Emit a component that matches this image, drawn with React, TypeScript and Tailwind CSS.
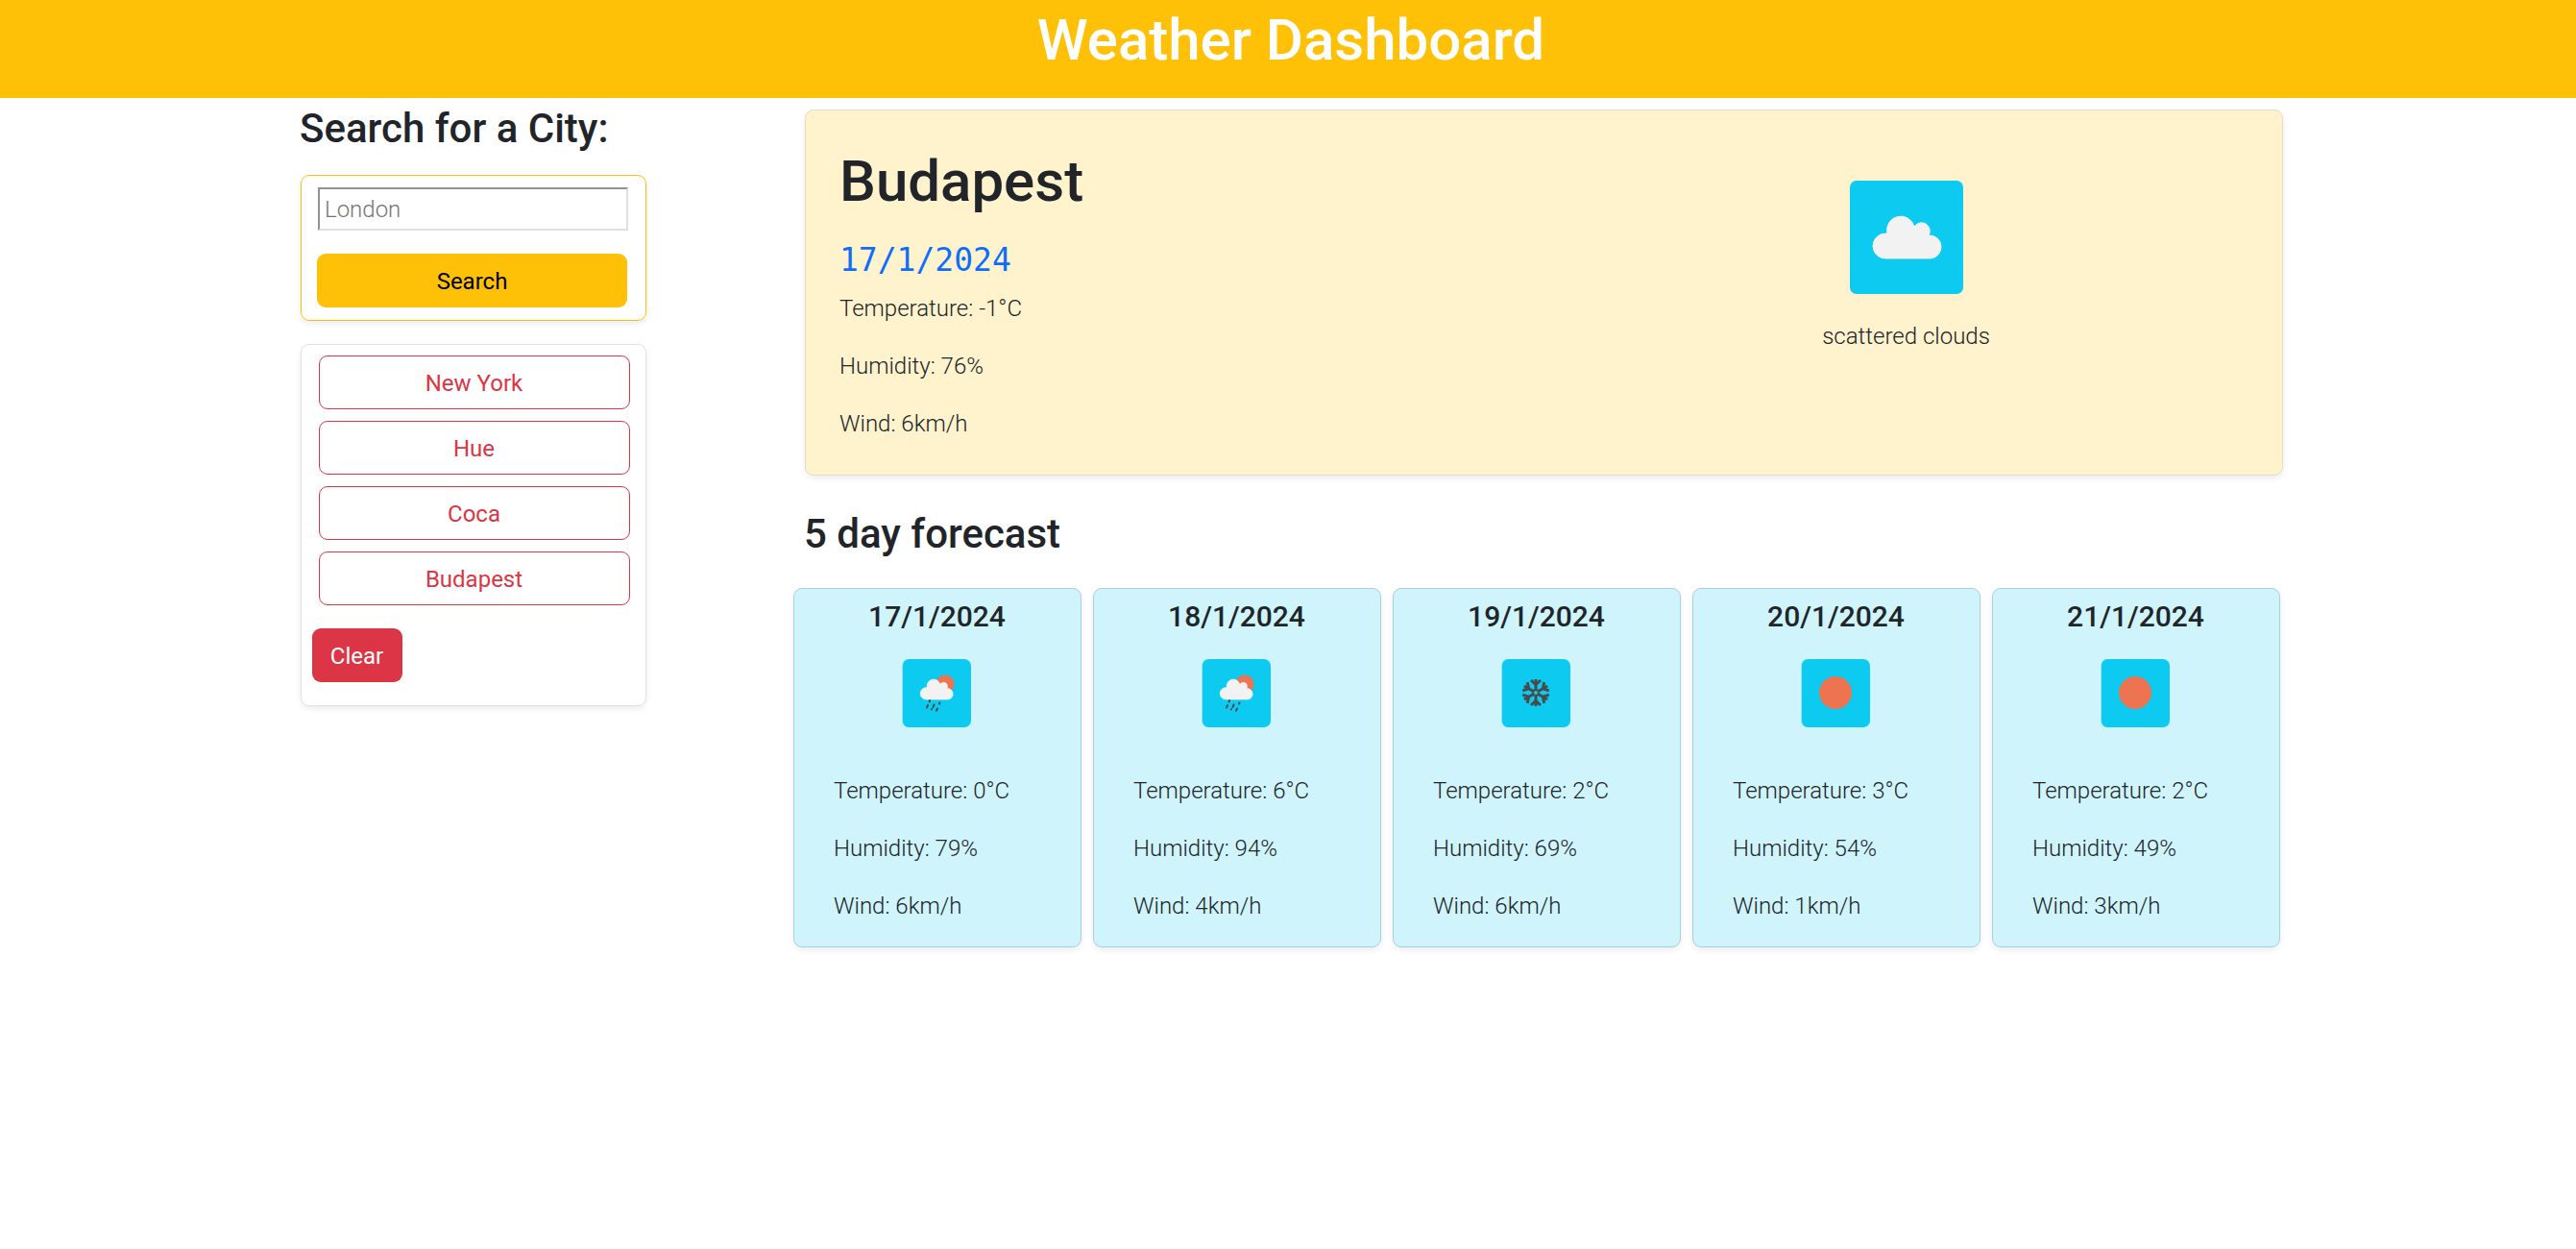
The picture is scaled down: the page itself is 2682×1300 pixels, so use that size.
const cities = ['New York', 'Hue', 'Coca', 'Budapest'];

const forecast = [
  { date: '17/1/2024', icon: 'rain', temp: '0°C', humidity: '79%', wind: '6km/h' },
  { date: '18/1/2024', icon: 'rain', temp: '6°C', humidity: '94%', wind: '4km/h' },
  { date: '19/1/2024', icon: 'snow', temp: '2°C', humidity: '69%', wind: '6km/h' },
  { date: '20/1/2024', icon: 'sun', temp: '3°C', humidity: '54%', wind: '1km/h' },
  { date: '21/1/2024', icon: 'sun', temp: '2°C', humidity: '49%', wind: '3km/h' },
];

const CLOUD =
  'M37 81A13 13 0 0 1 37 55H39A14 14 0 0 1 67 48A7.5 7.5 0 0 1 82 57A12 12 0 0 1 84 81Z';

function BigCloud() {
  return (
    <div className="h-[118px] w-[118px] overflow-hidden rounded-[7px] bg-[#0dcaf0]">
      <svg viewBox="0 0 118 118" className="block h-full w-full">
        <path d={CLOUD} fill="#f2f2f2" stroke="#fff" strokeWidth="0.8" />
      </svg>
    </div>
  );
}

function SmallIcon({ type }: { type: string }) {
  return (
    <div className="h-[71px] w-[72px] overflow-hidden rounded-[7px] border-l border-l-[#8fe4f6] bg-[#0dcaf0]">
      <svg viewBox="0 0 71 71" className="block h-full w-full">
        {type === 'sun' && <circle cx="35" cy="35" r="17" fill="#ee7350" />}
        {type === 'rain' && (
          <g>
            <circle cx="44" cy="26" r="9.5" fill="#ee7350" />
            <g transform="translate(6.6 3.2) scale(0.48)">
              <path d={CLOUD} fill="#f2f2f2" stroke="#fff" strokeWidth="1" />
            </g>
            <g stroke="#4a4a4a" strokeWidth="2" strokeLinecap="round">
              <path d="M28 43L27.6 44.5" />
              <path d="M26 48L25 50.5" />
              <path d="M32.5 47.5L31.5 50" />
              <path d="M38.5 45.5L38 46.5" />
              <path d="M30 52L29.8 52.5" />
              <path d="M36 51.5L35 53.5" />
            </g>
          </g>
        )}
        {type === 'snow' && (
          <g stroke="#4a4a4a" strokeWidth="3" fill="none" transform="translate(35 35)">
            {[0, 60, 120, 180, 240, 300].map((a) => (
              <g key={a} transform={`rotate(${a})`}>
                <path d="M0 -3.5V-14" />
                <path d="M-5 -13L0 -8.5L5 -13" />
              </g>
            ))}
            <circle r="3" strokeWidth="2" />
          </g>
        )}
      </svg>
    </div>
  );
}

function Stat({ children }: { children: React.ReactNode }) {
  return <p className="mb-6 text-2xl leading-9 font-light">{children}</p>;
}

export default function App() {
  return (
    <div className="min-h-[1300px] bg-white font-['Roboto',sans-serif] text-[#212529]">
      <header className="flex h-[102px] justify-center bg-[#ffc107] pt-[6px] pl-[6px]">
        <h1 className="text-[60px] leading-[72px] font-medium text-white">Weather Dashboard</h1>
      </header>

      <div className="flex pl-[312px]">
        <aside className="w-[526px] pt-[7px]">
          <h2 className="text-[42px] leading-[50px] font-medium">Search for a City:</h2>
          <div className="mt-[23px] ml-px h-[152px] w-[360px] rounded-[9px] border border-[#ffc107] pt-3 pl-[16px] shadow-[0_3px_6px_rgba(0,0,0,0.075)]">
            <input
              placeholder="London"
              className="ml-px block h-[45px] w-[323px] border-2 border-t-[#929292] border-r-[#e0e0e0] border-b-[#e0e0e0] border-l-[#929292] px-[5px] text-2xl font-light outline-none placeholder:text-[#757575]"
            />
            <button className="mt-6 block h-14 w-[323px] rounded-[9px] bg-[#ffc107] pt-px text-2xl text-black">
              Search
            </button>
          </div>
          <div className="mt-6 ml-px h-[377px] w-[360px] rounded-[9px] border border-[#dee2e6] pt-[11px] pl-[11px] shadow-[0_3px_6px_rgba(0,0,0,0.075)]">
            <div className="ml-[7px] flex w-[324px] flex-col gap-3">
              {cities.map((city) => (
                <button
                  key={city}
                  className="h-14 rounded-[9px] border border-[#dc3545] pt-px pr-px text-2xl text-[#dc3545]"
                >
                  {city}
                </button>
              ))}
            </div>
            <button className="mt-6 h-14 w-[94px] rounded-[9px] bg-[#dc3545] pt-px pr-px text-2xl text-white">
              Clear
            </button>
          </div>
        </aside>

        <main className="w-[1539px] pt-3">
          <section className="flex h-[381px] rounded-[9px] border border-[#e6dcc0] bg-[#fff3cd] shadow-[0_3px_6px_rgba(0,0,0,0.075)]">
            <div className="w-[762px] pt-[38px] pl-[35px]">
              <h2 className="text-[60px] leading-[72px] font-medium">Budapest</h2>
              <code className="mt-[26px] block font-['DejaVu_Sans_Mono',monospace] text-[33px] leading-[39px] text-[#0d6efd]">
                17/1/2024
              </code>
              <div className="mt-[13px]">
                <Stat>Temperature: -1°C</Stat>
                <Stat>Humidity: 76%</Stat>
                <Stat>Wind: 6km/h</Stat>
              </div>
            </div>
            <div className="flex w-[767px] flex-col items-center pt-[73px]">
              <BigCloud />
              <p className="mt-[26px] text-2xl leading-9 font-light">scattered clouds</p>
            </div>
          </section>

          <h2 className="mt-[36px] -ml-px text-[42px] leading-[50px] font-medium">5 day forecast</h2>

          <div className="mt-[31px] -ml-3 flex gap-3">
            {forecast.map((day) => (
              <article
                key={day.date}
                className="h-[374px] w-[300px] rounded-[9px] border border-[#a8d0dc] bg-[#cff4fc] shadow-[0_3px_6px_rgba(0,0,0,0.075)]"
              >
                <h3 className="pt-[11px] pr-px text-center text-[30px] leading-[36px] font-medium">{day.date}</h3>
                <div className="mt-[26px] flex justify-center pr-[3px]">
                  <SmallIcon type={day.icon} />
                </div>
                <div className="mt-[48px] pl-[41px]">
                  <Stat>Temperature: {day.temp}</Stat>
                  <Stat>Humidity: {day.humidity}</Stat>
                  <Stat>Wind: {day.wind}</Stat>
                </div>
              </article>
            ))}
          </div>
        </main>
      </div>
    </div>
  );
}
